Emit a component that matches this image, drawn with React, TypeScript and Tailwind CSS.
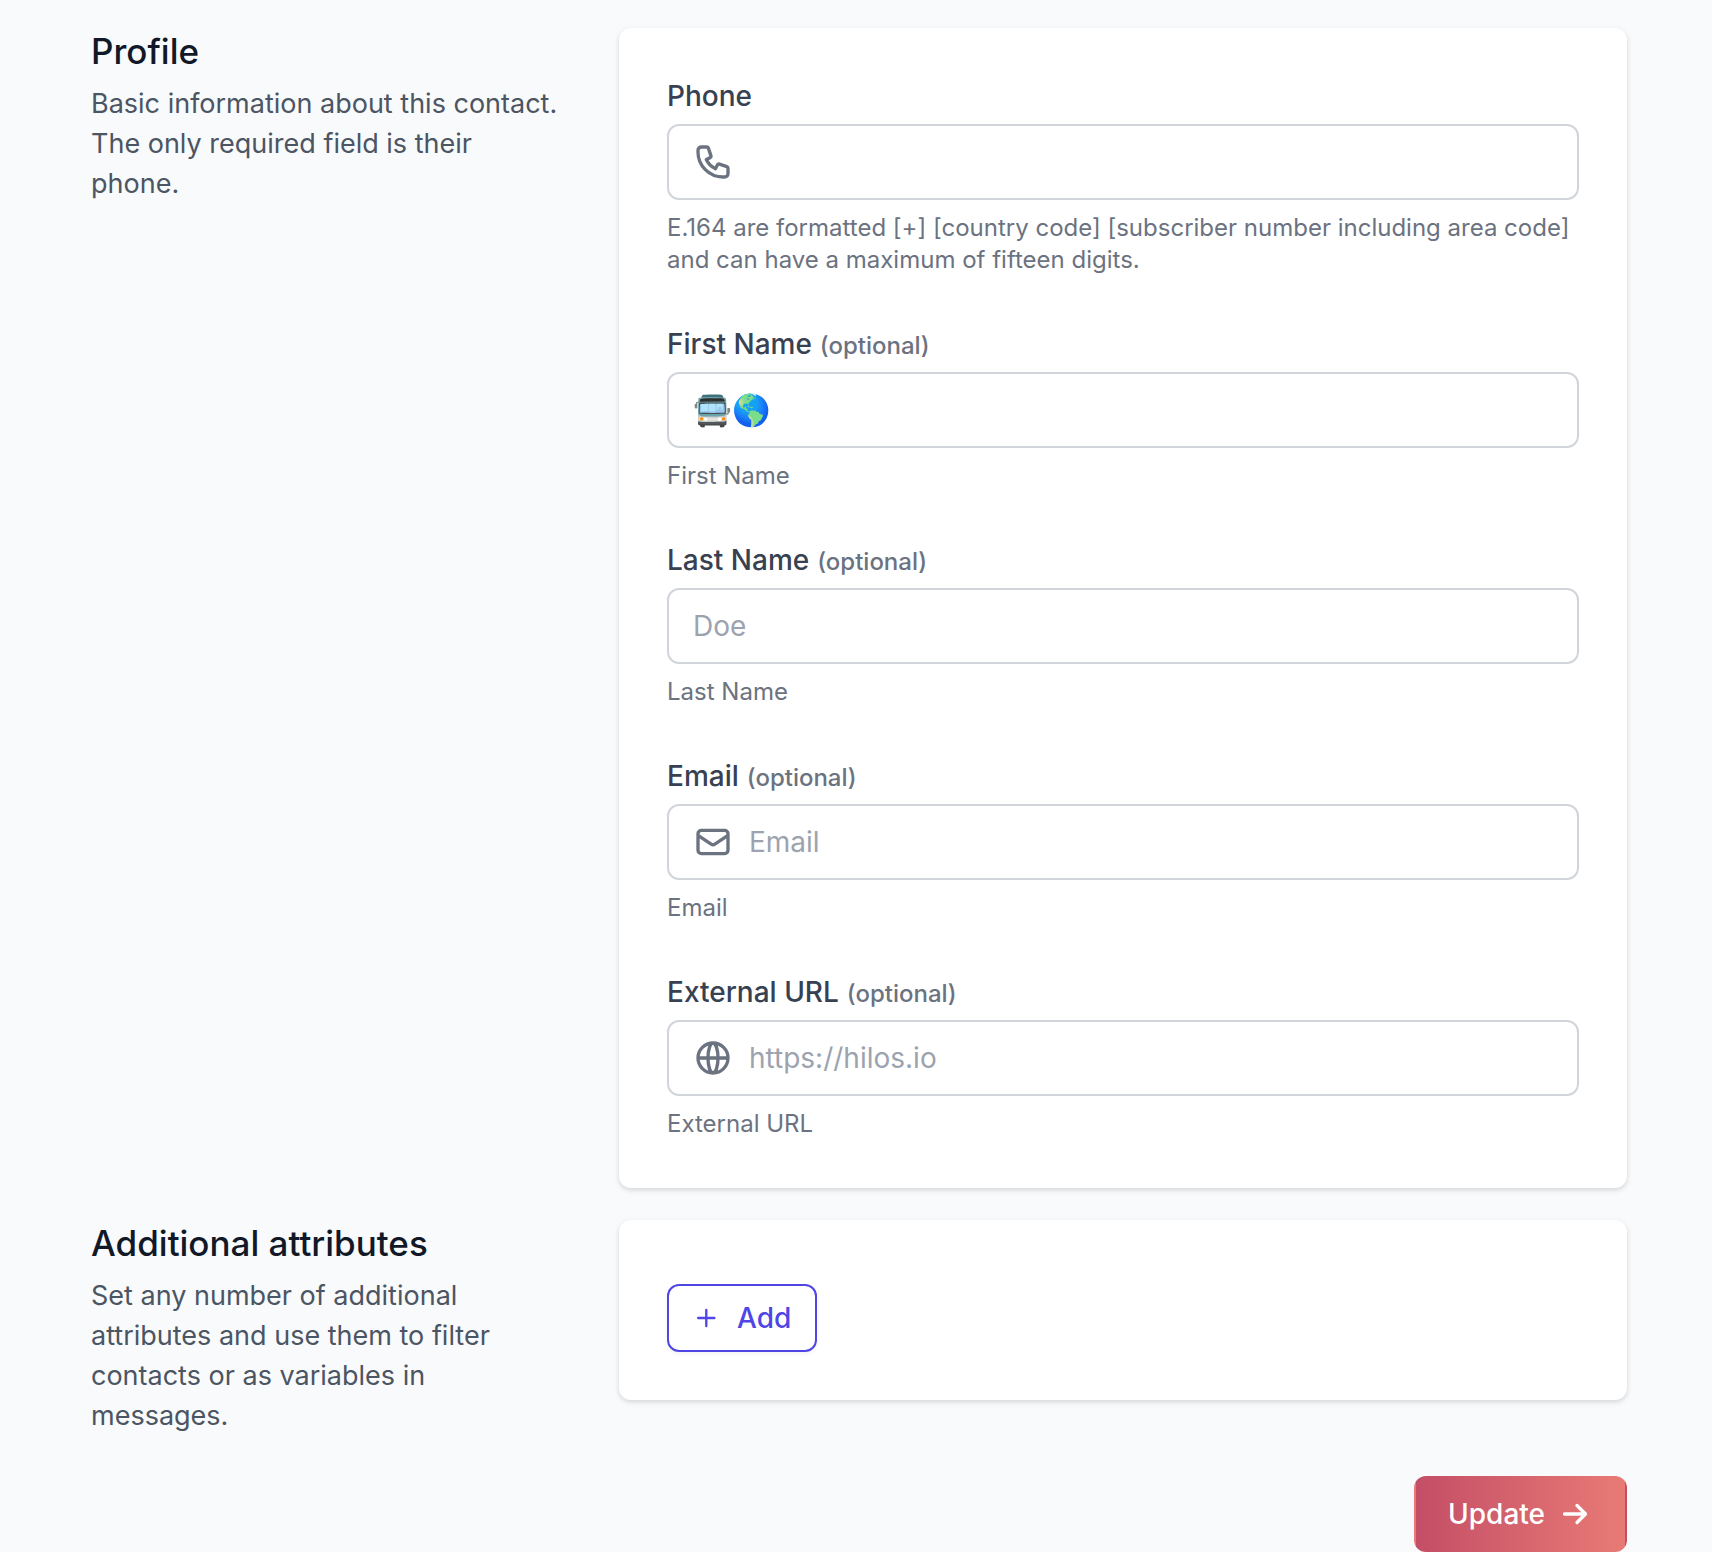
import { useState } from 'react';
import type { ReactNode } from 'react';
import clsx from 'clsx';

type FieldProps = {
  id: string;
  label: string;
  type?: string;
  placeholder?: string;
  help: string;
  optional?: boolean;
  icon?: ReactNode;
  inputClassName?: string;
  value: string;
  onChange: (value: string) => void;
};

function OutlineIcon({ d }: { d: string }) {
  return (
    <svg
      className="size-10 text-[#6b7280]"
      viewBox="0 0 24 24"
      fill="none"
      stroke="currentColor"
      strokeWidth={2}
      strokeLinecap="round"
      strokeLinejoin="round"
      aria-hidden="true"
    >
      <path d={d} />
    </svg>
  );
}

const PHONE =
  'M3 5a2 2 0 012-2h3.28a1 1 0 01.948.684l1.498 4.493a1 1 0 01-.502 1.21l-2.257 1.13a11.042 11.042 0 005.516 5.516l1.13-2.257a1 1 0 011.21-.502l4.493 1.498a1 1 0 01.684.949V19a2 2 0 01-2 2h-1C9.716 21 3 14.284 3 6V5z';
const MAIL =
  'M3 8l7.89 5.26a2 2 0 002.22 0L21 8M5 19h14a2 2 0 002-2V7a2 2 0 00-2-2H5a2 2 0 00-2 2v10a2 2 0 002 2z';
const GLOBE =
  'M21 12a9 9 0 01-9 9m9-9a9 9 0 00-9-9m9 9H3m9 9a9 9 0 01-9-9m9 9c1.657 0 3-4.03 3-9s-1.343-9-3-9m0 18c-1.657 0-3-4.03-3-9s1.343-9 3-9m-9 9a9 9 0 019-9';

function Field({ id, label, type = 'text', placeholder, help, optional, icon, inputClassName, value, onChange }: FieldProps) {
  return (
    <div>
      <label htmlFor={id} className="block text-[28px] leading-10 font-medium text-[#374151]">
        {label}
        {optional && <span className="ml-2 text-2xl leading-8 text-[#6b7280]">(optional)</span>}
      </label>
      <div className="mt-2 flex h-19 items-center gap-4 rounded-xl border-2 border-[#d1d5db] bg-white px-6 focus-within:border-[#4f46e5]">
        {icon}
        <input
          id={id}
          name={id}
          type={type}
          placeholder={placeholder}
          value={value}
          onChange={(e) => onChange(e.target.value)}
          aria-describedby={`${id}-help`}
          className={clsx(
            'min-w-0 flex-1 bg-transparent leading-10 text-[#111827] outline-none placeholder:text-[#9ca3af]',
            inputClassName ?? 'text-[28px]'
          )}
        />
      </div>
      <p id={`${id}-help`} className="mt-3 text-2xl leading-8 text-[#6b7280]">
        {help}
      </p>
    </div>
  );
}

function Section({ title, description, className, children }: { title: string; description: string; className?: string; children: ReactNode }) {
  return (
    <section className="grid grid-cols-3 gap-12">
      <div className="pr-2">
        <h3 className="text-[35px] leading-[46px] font-medium text-[#111827]">{title}</h3>
        <p className="mt-2.5 text-[27px] leading-10 text-[#4b5563]">{description}</p>
      </div>
      <div
        className={clsx(
          'col-span-2 self-start rounded-xl bg-white px-12 pb-12 shadow-[0_2px_6px_rgba(0,0,0,0.1),0_2px_4px_rgba(0,0,0,0.06)]',
          className
        )}
      >
        {children}
      </div>
    </section>
  );
}

export default function App() {
  const [contact, setContact] = useState({
    phone: '',
    first_name: '🚍🌎',
    last_name: '',
    email: '',
    external_url: '',
  });

  const update = (key: keyof typeof contact) => (value: string) => setContact({ ...contact, [key]: value });

  return (
    <div className="min-h-screen bg-[#f9fafb] pt-7 pr-[85px] pl-[91px] font-['Inter','Liberation_Sans',sans-serif]">
      <form onSubmit={(e) => e.preventDefault()}>
        <div className="flex flex-col gap-8">
          <Section
            title="Profile"
            description="Basic information about this contact. The only required field is their phone."
            className="pt-12"
          >
            <div className="flex flex-col gap-12">
              <Field
                id="phone"
                label="Phone"
                type="tel"
                help="E.164 are formatted [+] [country code] [subscriber number including area code] and can have a maximum of fifteen digits."
                icon={<OutlineIcon d={PHONE} />}
                value={contact.phone}
                onChange={update('phone')}
              />
              <Field
                id="first_name"
                label="First Name"
                help="First Name"
                optional
                inputClassName="text-[31px]"
                value={contact.first_name}
                onChange={update('first_name')}
              />
              <Field id="last_name" label="Last Name" placeholder="Doe" help="Last Name" optional value={contact.last_name} onChange={update('last_name')} />
              <Field
                id="email"
                label="Email"
                type="email"
                placeholder="Email"
                help="Email"
                optional
                icon={<OutlineIcon d={MAIL} />}
                value={contact.email}
                onChange={update('email')}
              />
              <Field
                id="external_url"
                label="External URL"
                type="url"
                placeholder="https://hilos.io"
                help="External URL"
                optional
                icon={<OutlineIcon d={GLOBE} />}
                value={contact.external_url}
                onChange={update('external_url')}
              />
            </div>
          </Section>

          <Section
            title="Additional attributes"
            description="Set any number of additional attributes and use them to filter contacts or as variables in messages."
            className="pt-16"
          >
            <button
              type="button"
              className="flex h-17 items-center gap-3 rounded-xl border-2 border-[#4f46e5] bg-white pr-6 pl-5 text-[28px] leading-8 font-medium text-[#4f46e5] shadow-[0_2px_4px_rgba(0,0,0,0.05)]"
            >
              <svg className="size-9" viewBox="0 0 20 20" fill="none" stroke="currentColor" strokeWidth={1.3} strokeLinecap="round" aria-hidden="true">
                <path d="M9.6 5.5v9M5.1 10h9" />
              </svg>
              Add
            </button>
          </Section>
        </div>

        <div className="mt-10 flex justify-end">
          <button
            type="submit"
            className="flex h-19 items-center gap-4 rounded-xl border-2 border-transparent bg-linear-to-r from-[#c44e66] to-[#e87a75] pr-9 pl-8 text-[28px] leading-10 font-medium text-white"
          >
            Update
            <svg className="size-7" viewBox="0 0 28 28" fill="none" stroke="currentColor" strokeWidth={3.3} strokeLinecap="round" strokeLinejoin="round" aria-hidden="true">
              <path d="M3.5 14h21M16 5.5l8.5 8.5-8.5 8.5" />
            </svg>
          </button>
        </div>
      </form>
    </div>
  );
}
